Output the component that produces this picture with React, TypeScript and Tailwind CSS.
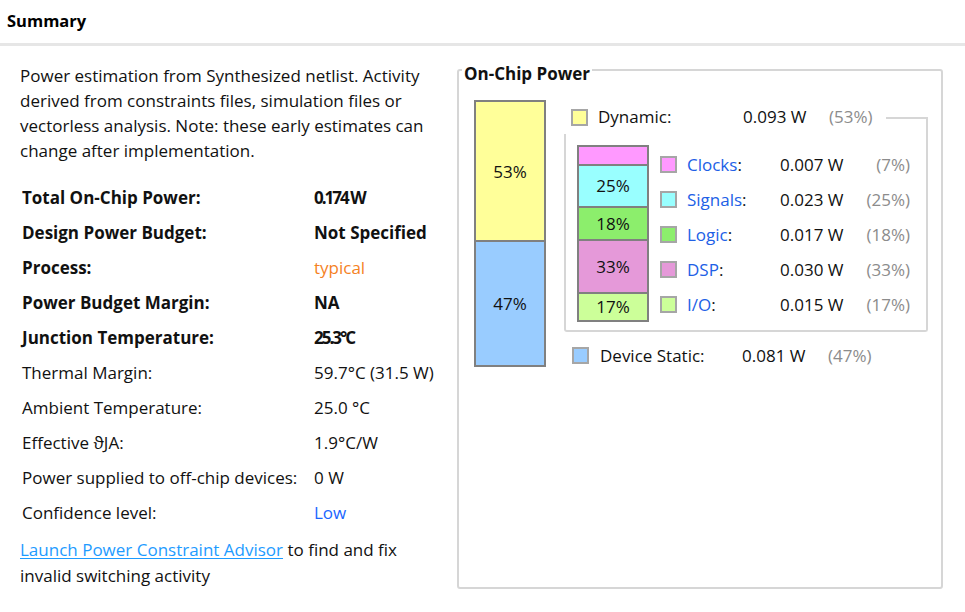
import React from 'react';

type Row = { label: string; value: string; bold?: boolean; tone?: 'orange' | 'blue'; squeeze?: boolean };

const rows: Row[] = [
  { label: 'Total On-Chip Power:', value: '0.174 W', bold: true, squeeze: true },
  { label: 'Design Power Budget:', value: 'Not Specified', bold: true },
  { label: 'Process:', value: 'typical', bold: true, tone: 'orange' },
  { label: 'Power Budget Margin:', value: 'NA', bold: true },
  { label: 'Junction Temperature:', value: '25.3°C', bold: true, squeeze: true },
  { label: 'Thermal Margin:', value: '59.7°C (31.5 W)' },
  { label: 'Ambient Temperature:', value: '25.0 °C' },
  { label: 'Effective ϑJA:', value: '1.9°C/W' },
  { label: 'Power supplied to off-chip devices:', value: '0 W' },
  { label: 'Confidence level:', value: 'Low', tone: 'blue' },
];

const dynamicParts = [
  { name: 'Clocks', watts: '0.007 W', pct: 7, color: 'bg-[#ff99ff]', h: 'h-[17px]', show: false },
  { name: 'Signals', watts: '0.023 W', pct: 25, color: 'bg-[#99ffff]', h: 'h-[42px]', show: true },
  { name: 'Logic', watts: '0.017 W', pct: 18, color: 'bg-[#8cee6c]', h: 'h-[33px]', show: true },
  { name: 'DSP', watts: '0.030 W', pct: 33, color: 'bg-[#e599d9]', h: 'h-[53px]', show: true },
  { name: 'I/O', watts: '0.015 W', pct: 17, color: 'bg-[#ccff99]', h: 'flex-1', show: true },
];

const Swatch: React.FC<{ color: string }> = ({ color }) => (
  <span className={`inline-block w-[17px] h-[17px] border-2 border-[#a6a6a6] ${color}`} />
);

const SummaryLeft: React.FC = () => (
  <div className="w-[457px] pl-5 pr-[16px] pt-[17px] text-[17px] text-[#111]">
    <p className="leading-[25px]">
      Power estimation from Synthesized netlist. Activity derived from constraints files, simulation files or
      vectorless analysis. Note: these early estimates can change after implementation.
    </p>

    <div className="mt-[17px] pl-[2px]">
      {rows.map(r => (
        <div key={r.label} className="flex items-center h-[35px] whitespace-nowrap">
          <div className={`w-[292px] ${r.bold ? 'font-bold' : ''}`}>{r.label}</div>
          <div
            className={[
              r.bold && !r.tone ? 'font-bold' : '',
              r.tone === 'orange' ? 'text-[#f5821f]' : '',
              r.tone === 'blue' ? 'text-[#1a66ff]' : '',
              r.squeeze ? 'tracking-[-2px]' : '',
            ].join(' ')}
          >
            {r.value}
          </div>
        </div>
      ))}
    </div>

    <p className="mt-[7px] leading-[26px] w-[400px]">
      <a href="#" className="text-[#1e9bff] underline underline-offset-2">Launch Power Constraint Advisor</a>
      <span> to find and fix invalid switching activity</span>
    </p>
  </div>
);

const OnChipPower: React.FC = () => (
  <fieldset className="w-[486px] h-[533px] mt-[10px] border-2 border-[#d6d6d6] rounded-[3px] pl-[15px] pr-[12px] pt-[16px]">
    <legend className="ml-[-12px] px-[2px] pt-[8px] font-bold text-[17px] leading-[20px] text-[#111]">On-Chip Power</legend>

    <div className="flex">
      {/* total bar */}
      <div className="w-[72px] h-[267px] border-2 border-[#808080] flex flex-col text-[17px]">
        <div className="h-[140px] pt-[2px] bg-[#ffff99] border-b-2 border-[#808080] flex items-center justify-center">53%</div>
        <div className="flex-1 bg-[#99ccff] flex items-center justify-center">47%</div>
      </div>

      <div className="ml-[18px] w-[364px] text-[17px] whitespace-nowrap">
        {/* Dynamic heading row */}
        <div className="flex items-center h-[34px]">
          <div className="pl-[7px] flex items-center">
            <Swatch color="bg-[#ffff99]" />
          </div>
          <span className="ml-[10px] w-[145px]">Dynamic:</span>
          <span className="w-[86px]">0.093 W</span>
          <span className="text-[#8c8c8c]">(53%)</span>
          <div className="ml-[13px] flex-1 self-end h-[17px] border-t-2 border-r-2 border-[#d6d6d6]" />
        </div>

        {/* Dynamic breakdown */}
        <div className="border-2 border-t-0 border-[#d6d6d6] rounded-b-[3px] pl-[11px] pt-[11px] pb-[8px] flex">
          <div className="w-[72px] h-[177px] border-2 border-[#808080] flex flex-col">
            {dynamicParts.map((p, i) => (
              <div
                key={p.name}
                className={`${p.h} ${p.color} flex items-center justify-center ${i > 0 ? 'border-t-2 border-[#808080]' : ''}`}
              >
                {p.show ? `${p.pct}%` : ''}
              </div>
            ))}
          </div>
          <div className="ml-[11px] flex flex-col pt-[2px]">
            {dynamicParts.map(p => (
              <div key={p.name} className="flex items-center h-[35px]">
                <Swatch color={p.color} />
                <span className="ml-[10px] w-[93px]">
                  <span className="text-[#2160e6]">{p.name}</span>:
                </span>
                <span className="w-[70px]">{p.watts}</span>
                <span className="w-[60px] text-right text-[#8c8c8c]">({p.pct}%)</span>
              </div>
            ))}
          </div>
        </div>

        {/* Device static */}
        <div className="flex items-center h-[47px] pl-[8px]">
          <Swatch color="bg-[#99ccff]" />
          <span className="ml-[11px] w-[142px]">Device Static:</span>
          <span className="w-[86px]">0.081 W</span>
          <span className="text-[#8c8c8c]">(47%)</span>
        </div>
      </div>
    </div>
  </fieldset>
);

const App: React.FC = () => {
  return (
    <div className="w-[965px] h-[612px] bg-white overflow-hidden font-['Open_Sans','Noto_Sans',sans-serif] text-[#111]">
      {/* Header */}
      <div className="h-[46px] border-b-[3px] border-[#e6e6e6] flex items-center pl-[7px]">
        <h1 className="font-bold text-[16.5px] text-black">Summary</h1>
      </div>

      {/* Content */}
      <div className="flex">
        <SummaryLeft />
        <OnChipPower />
      </div>
    </div>
  );
};

export default App;
